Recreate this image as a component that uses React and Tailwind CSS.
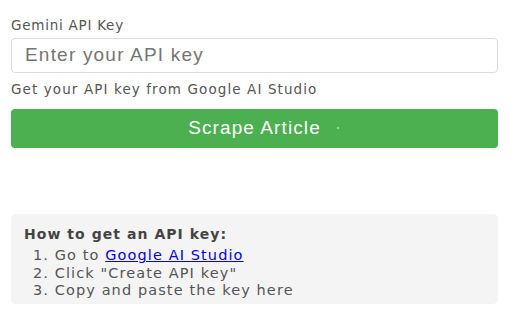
import React from "react";

export default function App() {
  const sans = { fontFamily: '"DejaVu Sans", Verdana, sans-serif' };
  return (
    <div className="w-[512px] h-[320px] bg-white overflow-hidden pt-[15px] pl-[11px]">
      <div className="w-[487px] flex flex-col">
        <div className="text-[13.5px] leading-[20px] text-[#555] tracking-[0.75px] mb-[3px]" style={sans}>
          Gemini API Key
        </div>
        <div className="h-[35px] border border-[#dcdcdc] rounded-[4px] flex items-center pl-[13px]">
          <span className="font-['Liberation_Sans',Arial,sans-serif] text-[19px] tracking-[1.2px] text-[#757575]">
            Enter your API key
          </span>
        </div>
        <div className="mt-[6px] text-[13.5px] leading-[20px] text-[#555] tracking-[1.1px]" style={sans}>
          Get your API key from Google AI Studio
        </div>
        <div className="mt-[10px] h-[39px] bg-[#4caf50] rounded-[4px] relative flex items-center justify-center">
          <span className="font-['Liberation_Sans',Arial,sans-serif] text-[19px] tracking-[1.1px] text-white">
            Scrape Article
          </span>
          <span className="absolute left-[326px] top-[18px] w-[2px] h-[2px] rounded-full bg-white/60" />
        </div>
        <div className="mt-[66px] h-[90px] bg-[#f4f4f4] rounded-[5px] pl-[13px] pt-[12px]">
          <div className="text-[14px] leading-[17px] font-bold text-[#444] tracking-[1.05px]" style={sans}>
            How to get an API key:
          </div>
          <div className="mt-[4px] pl-[9px] text-[14.5px] leading-[17.5px] text-[#555] tracking-[1.1px]" style={sans}>
            <div>
              1. Go to <span className="text-[#0000ee] underline">Google AI Studio</span>
            </div>
            <div>2. Click "Create API key"</div>
            <div>3. Copy and paste the key here</div>
          </div>
        </div>
      </div>
    </div>
  );
}
